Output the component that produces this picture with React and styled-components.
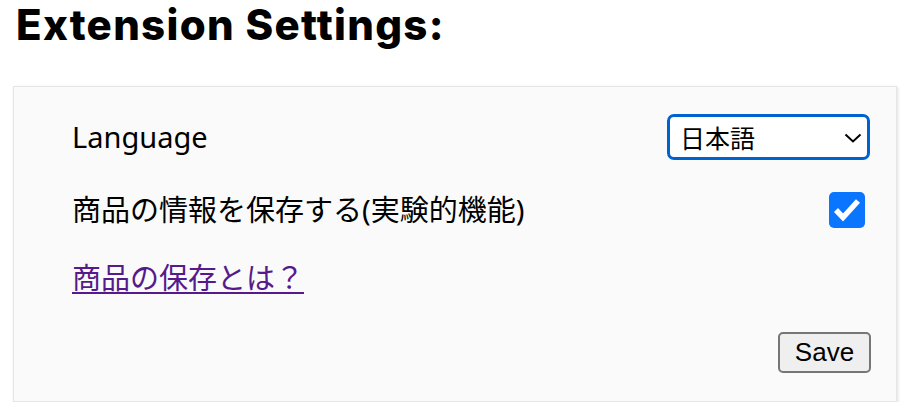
import React, { useState } from 'react'
import styled, { createGlobalStyle } from 'styled-components'

const GlobalStyle = createGlobalStyle`
  body {
    margin: 0;
    background: #ffffff;
    font-family: "Noto Sans", "Noto Sans CJK JP", sans-serif;
    color: #000000;
  }
`

const Page = styled.div`
  padding: 0 19px 0 13px;
`

const Title = styled.h1`
  margin: 0 0 0 3px;
  padding-top: 1px;
  font-family: Inter, "Liberation Sans", sans-serif;
  font-size: 42px;
  font-weight: 800;
  line-height: 47px;
  letter-spacing: 1.3px;
`

const Card = styled.div`
  margin-top: 38px;
  background: #fafafa;
  border: 1px solid #e6e6e6;
  box-shadow: 1px 1px 3px rgba(0, 0, 0, 0.12);
  padding: 27px 26px 28px 58px;
  display: flex;
  flex-direction: column;
`

const Row = styled.div`
  display: flex;
  align-items: center;
  justify-content: space-between;
  height: ${(p) => p.$height}px;
  margin-top: ${(p) => p.$gap || 0}px;
`

const Label = styled.span`
  font-size: 29px;
  line-height: 34px;
`

const SelectWrap = styled.div`
  position: relative;
  width: 203px;
  height: 46px;
`

const Select = styled.select`
  appearance: none;
  width: 100%;
  height: 100%;
  box-sizing: border-box;
  border: 3px solid #0062cf;
  border-radius: 7px;
  background: #ffffff;
  padding: 0 30px 0 10px;
  font-family: "Noto Sans CJK JP", sans-serif;
  font-size: 25px;
  color: #000000;
  outline: none;
`

const Chevron = styled.svg`
  position: absolute;
  right: 8px;
  top: 19px;
  pointer-events: none;
`

const Check = styled.span`
  width: 36px;
  height: 36px;
  margin-right: 5px;
  border-radius: 5px;
  background: #0a75ff;
  display: block;
  cursor: pointer;
`

const HelpLink = styled.a`
  font-size: 29px;
  line-height: 34px;
  color: #551a8b;
  text-decoration: underline;
  text-underline-offset: 3px;
  text-decoration-thickness: 2px;
`

const SaveButton = styled.button`
  margin-left: auto;
  margin-right: -1px;
  width: 93px;
  height: 41px;
  box-sizing: border-box;
  border: 2px solid #767676;
  border-radius: 5px;
  background: #efefef;
  font-family: "Liberation Sans", Arial, sans-serif;
  font-size: 26px;
  color: #000000;
  padding: 0;
`

export default function App() {
  const [lang, setLang] = useState('ja')
  const [store, setStore] = useState(true)

  return (
    <Page>
      <GlobalStyle />
      <Title>Extension Settings:</Title>
      <Card>
        <Row $height={46}>
          <Label>Language</Label>
          <SelectWrap>
            <Select value={lang} onChange={(e) => setLang(e.target.value)}>
              <option value="ja">日本語</option>
              <option value="en">English</option>
            </Select>
            <Chevron width="18" height="10" viewBox="0 0 18 10">
              <path d="M1.5 1.5 L9 8.5 L16.5 1.5" fill="none" stroke="#000" strokeWidth="2" />
            </Chevron>
          </SelectWrap>
        </Row>
        <Row $height={36} $gap={32}>
          <Label>商品の情報を保存する(実験的機能)</Label>
          <Check role="checkbox" aria-checked={store} onClick={() => setStore(!store)}>
            {store && (
              <svg width="36" height="36" viewBox="0 0 36 36">
                <path d="M7 18 L14 25.5 L29 9" fill="none" stroke="#fff" strokeWidth="5.5" strokeLinejoin="miter" />
              </svg>
            )}
          </Check>
        </Row>
        <Row $height={34} $gap={33}>
          <HelpLink href="#">商品の保存とは？</HelpLink>
        </Row>
        <Row $height={41} $gap={37}>
          <SaveButton>Save</SaveButton>
        </Row>
      </Card>
    </Page>
  )
}
